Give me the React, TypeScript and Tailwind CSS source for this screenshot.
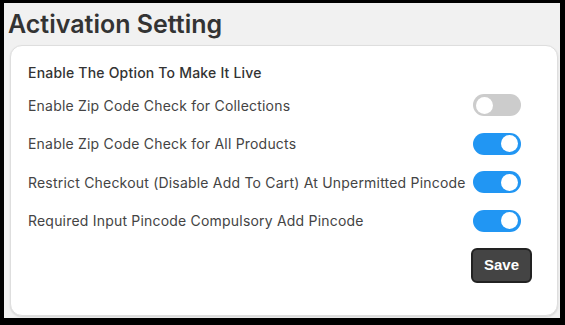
const rows = [
  { label: 'Enable Zip Code Check for Collections', on: false },
  { label: 'Enable Zip Code Check for All Products', on: true },
  { label: 'Restrict Checkout (Disable Add To Cart) At Unpermitted Pincode', on: true },
  { label: 'Required Input Pincode Compulsory Add Pincode', on: true },
]

function Toggle({ on }: { on: boolean }) {
  return (
    <span
      className={`flex h-[22px] w-[48px] shrink-0 items-center rounded-full px-[3px] ${
        on ? 'justify-end bg-[#2196f3]' : 'justify-start bg-[#cccccc]'
      }`}
    >
      <span className="h-[17px] w-[17px] rounded-full bg-white" />
    </span>
  )
}

export default function App() {
  return (
    <div className="h-[325px] w-[565px] bg-black pt-[3px] pl-[4px] pr-[5px] pb-[7px] font-['Inter','Noto_Sans',sans-serif]">
      <div className="flex h-full flex-col bg-[#f1f1f1] pl-[6px] pr-[2px] pb-[2px]">
        <h1 className="-ml-[2px] flex h-[42px] items-center text-[25px] font-semibold leading-none text-[#333]">
          Activation Setting
        </h1>
        <div className="flex flex-1 flex-col rounded-[12px] border border-[#dedede] bg-white pl-[17px] pr-[25px] pt-[16px] shadow-[0_1px_2px_rgba(0,0,0,0.12)]">
          <div className="flex h-[20px] items-center text-[14px] font-medium tracking-[0.2px] text-[#333]">
            Enable The Option To Make It Live
          </div>
          <div className="mt-[4px] flex flex-col">
            {rows.map((r) => (
              <div key={r.label} className="flex h-[38.5px] items-center justify-between pr-[11px]">
                <span className="text-[14px] tracking-[0.2px] text-[#444]">{r.label}</span>
                <Toggle on={r.on} />
              </div>
            ))}
          </div>
          <div className="mt-[8px] flex justify-end">
            <button className="h-[35px] w-[61px] rounded-[6px] border-2 border-[#222] bg-[#444] font-['Liberation_Sans',Arial,sans-serif] text-[15px] font-bold text-white">
              Save
            </button>
          </div>
        </div>
      </div>
    </div>
  )
}
